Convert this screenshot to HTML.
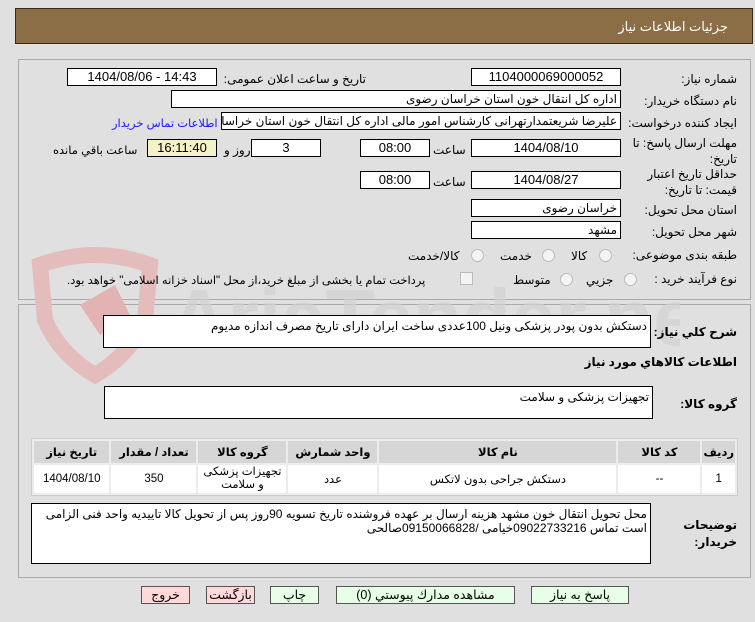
<!DOCTYPE html>
<html><head><meta charset="utf-8"><style>
body{margin:0;width:755px;height:622px;background:#e0e0e0;font-family:"Liberation Sans","DejaVu Sans",sans-serif;font-size:12px;color:#000;position:relative;overflow:hidden}
.a{position:absolute}
.hdr{left:15px;top:8px;width:736px;height:34px;background:#8b6d46;border:1px solid #3a2a15}
.hdr span{position:absolute;right:24px;top:10px;color:#fff;font-size:13px}
.panel{border:1px solid #aaa;background:transparent}
.box{position:absolute;background:#fff;border:1px solid #000;box-sizing:border-box;height:18px;line-height:16px;text-align:center;font-size:13px;white-space:nowrap;overflow:hidden}
.l{position:absolute;direction:rtl;white-space:nowrap;font-size:12px}
.rad{position:absolute;width:11px;height:11px;border:1px solid #bbb;border-radius:50%;background:#f4f4f4}
.btn{position:absolute;top:586px;height:18px;border:1px solid #555;box-sizing:border-box;text-align:center;line-height:16px;font-size:12.5px}
.g{background:#e6ffe6}.p{background:#ffd9d9}
table{border-collapse:separate;border-spacing:2px;background:#ececec}
td{font-size:11.5px;text-align:center}
</style></head><body>
<div class="a hdr"><span>جزئیات اطلاعات نیاز</span></div>
<div class="a panel" style="left:18px;top:59px;width:731px;height:239px"></div>
<div class="a panel" style="left:18px;top:304px;width:731px;height:272px"></div>
<svg class="a" style="left:20px;top:245px" width="660" height="140">
<path d="M20 20 Q75 0 130 20 L125 75 Q110 110 75 130 Q40 110 25 75 Z" fill="none" stroke="#e5bcbc" stroke-width="16"/>
<path d="M60 60 L95 40 L110 70 L80 90 Z" fill="#e3b3b3"/>
<text x="150" y="100" font-family="Liberation Sans" font-size="80" font-weight="bold" fill="#d2d2d2" opacity="0.7">AriaTender.net</text>
</svg>

<div class="l" style="right:18px;top:72px">شماره نیاز:</div>
<div class="box" style="left:471px;top:68px;width:150px">1104000069000052</div>
<div class="l" style="right:389px;top:72px">تاریخ و ساعت اعلان عمومی:</div>
<div class="box" style="left:67px;top:68px;width:150px">1404/08/06 - 14:43</div>

<div class="l" style="right:18px;top:94px">نام دستگاه خریدار:</div>
<div class="box" style="left:171px;top:90px;width:450px;text-align:right;padding-right:3px;font-size:12px">اداره کل انتقال خون استان خراسان رضوی</div>

<div class="l" style="right:18px;top:116px">ایجاد کننده درخواست:</div>
<div class="box" style="left:221px;top:112px;width:400px;text-align:right;padding-right:3px;font-size:12px;direction:rtl">علیرضا شریعتمدارتهرانی کارشناس امور مالی اداره کل انتقال خون استان خراسان رضوی</div>
<div class="l" style="left:112px;top:116px;color:#1a1aff;font-size:11.5px">اطلاعات تماس خریدار</div>

<div class="l" style="right:18px;top:136px">مهلت ارسال پاسخ: تا</div>
<div class="l" style="right:18px;top:152px">تاریخ:</div>
<div class="box" style="left:471px;top:139px;width:150px">1404/08/10</div>
<div class="l" style="left:433px;top:143px">ساعت</div>
<div class="box" style="left:360px;top:139px;width:70px">08:00</div>
<div class="box" style="left:251px;top:139px;width:70px">3</div>
<div class="l" style="left:224px;top:143px">روز و</div>
<div class="box" style="left:147px;top:139px;width:70px;background:#f5f2c9">16:11:40</div>
<div class="l" style="left:53px;top:143px;font-size:11.5px">ساعت باقي مانده</div>

<div class="l" style="right:18px;top:167px">حداقل تاریخ اعتبار</div>
<div class="l" style="right:18px;top:183px">قیمت: تا تاریخ:</div>
<div class="box" style="left:471px;top:171px;width:150px">1404/08/27</div>
<div class="l" style="left:433px;top:175px">ساعت</div>
<div class="box" style="left:360px;top:171px;width:70px">08:00</div>

<div class="l" style="right:18px;top:203px">استان محل تحویل:</div>
<div class="box" style="left:471px;top:199px;width:150px;text-align:right;padding-right:3px;font-size:12px">خراسان رضوی</div>
<div class="l" style="right:18px;top:225px">شهر محل تحویل:</div>
<div class="box" style="left:471px;top:221px;width:150px;text-align:right;padding-right:3px;font-size:12px">مشهد</div>

<div class="l" style="right:18px;top:248px">طبقه بندی موضوعی:</div>
<div class="rad" style="left:599px;top:249px"></div><div class="l" style="left:571px;top:249px">كالا</div>
<div class="rad" style="left:542px;top:249px"></div><div class="l" style="left:500px;top:249px">خدمت</div>
<div class="rad" style="left:471px;top:249px"></div><div class="l" style="left:408px;top:249px">كالا/خدمت</div>

<div class="l" style="right:18px;top:272px">نوع فرآیند خرید :</div>
<div class="rad" style="left:624px;top:273px"></div><div class="l" style="left:586px;top:273px">جزيي</div>
<div class="rad" style="left:560px;top:273px"></div><div class="l" style="left:513px;top:273px">متوسط</div>
<div class="a" style="left:460px;top:272px;width:11px;height:11px;border:1px solid #bbb;background:#f4f4f4"></div>
<div class="l" style="left:67px;top:273px;font-size:11.5px">پرداخت تمام یا بخشی از مبلغ خرید،از محل "اسناد خزانه اسلامی" خواهد بود.</div>

<div class="l" style="right:18px;top:325px;font-weight:bold">شرح كلي نياز:</div>
<div class="box" style="left:103px;top:315px;width:548px;height:33px;text-align:right;padding-right:3px;font-size:12px;line-height:20px;direction:rtl">دستکش بدون پودر پزشکی ونیل 100عددی ساخت ایران دارای تاریخ مصرف اندازه مدیوم</div>
<div class="l" style="right:18px;top:355px;font-weight:bold">اطلاعات كالاهاي مورد نياز</div>
<div class="l" style="right:18px;top:397px;font-weight:bold">گروه كالا:</div>
<div class="box" style="left:104px;top:386px;width:549px;height:33px;text-align:right;padding-right:3px;font-size:12px;line-height:20px">تجهیزات پزشکی و سلامت</div>

<table class="a" style="left:31px;top:438px;width:707px;height:58px;border:1px solid #ccc" dir="rtl">
<tr style="background:#d6d6d6;height:22px;font-weight:bold"><td style="width:26px">رديف</td><td style="width:80px">كد كالا</td><td style="width:235px">نام كالا</td><td style="width:87px">واحد شمارش</td><td style="width:86px">گروه كالا</td><td style="width:83px">تعداد / مقدار</td><td>تاريخ نياز</td></tr>
<tr style="background:#fff"><td>1</td><td>--</td><td>دستکش جراحی بدون لاتکس</td><td>عدد</td><td style="line-height:13px">تجهیزات پزشکی و سلامت</td><td>350</td><td>1404/08/10</td></tr>
</table>

<div class="l" style="right:18px;top:518px;font-weight:bold">توضيحات</div>
<div class="l" style="right:18px;top:535px;font-weight:bold">خريدار:</div>
<div class="box" style="left:31px;top:503px;width:620px;height:61px;text-align:right;padding:3px 3px 0 3px;font-size:12px;line-height:14px;white-space:normal;direction:rtl">محل تحویل انتقال خون مشهد هزینه ارسال بر عهده فروشنده تاریخ تسویه 90روز پس از تحویل کالا تاییدیه واحد فنی الزامی است تماس 09022733216خیامی /09150066828صالحی</div>

<div class="btn g" style="left:531px;width:98px">پاسخ به نياز</div>
<div class="btn g" style="left:336px;width:179px">مشاهده مدارك پيوستي (0)</div>
<div class="btn g" style="left:270px;width:49px">چاپ</div>
<div class="btn p" style="left:206px;width:49px">بازگشت</div>
<div class="btn p" style="left:141px;width:49px">خروج</div>
</body></html>
